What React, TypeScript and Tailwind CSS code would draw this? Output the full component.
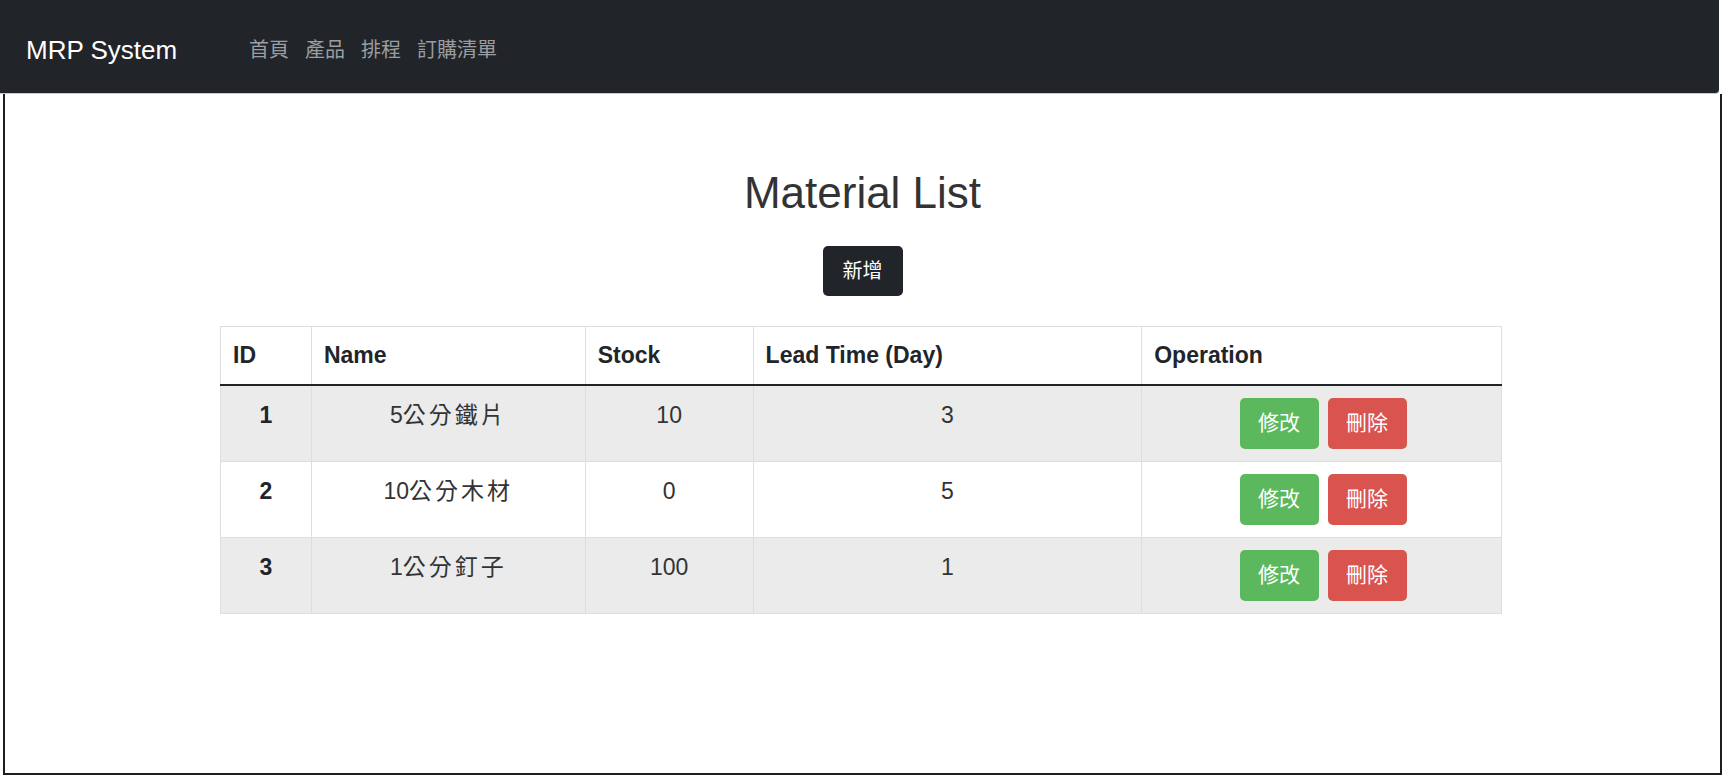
import React from 'react';

interface Material {
  id: number;
  size: string;
  name: string;
  stock: number;
  leadTime: number;
}

const materials: Material[] = [
  { id: 1, size: '5', name: '公分鐵片', stock: 10, leadTime: 3 },
  { id: 2, size: '10', name: '公分木材', stock: 0, leadTime: 5 },
  { id: 3, size: '1', name: '公分釘子', stock: 100, leadTime: 1 },
];

const navLinks = ['首頁', '產品', '排程', '訂購清單'];

const font = {
  fontFamily: '"Liberation Sans", "Noto Sans CJK TC", Arial, sans-serif',
};

export default function App() {
  return (
    <div className="w-[1724px] h-[778px] bg-white overflow-hidden" style={font}>
      <nav className="h-[94px] w-[1719px] bg-[#212529] rounded-br-[4px] border-b border-[#c9c9c9] flex items-center pt-[7px]">
        <span className="ml-[26px] w-[223px] text-[26px] text-white leading-none">MRP System</span>
        <div className="flex gap-4 text-[20px] text-[#9a9da1] leading-none">
          {navLinks.map((link) => (
            <a key={link} href="#" className="hover:text-white">
              {link}
            </a>
          ))}
        </div>
      </nav>

      <main className="ml-[3px] w-[1719px] h-[681px] border-l-2 border-r-2 border-b-2 border-[#1e1e1e] flex flex-col items-center pt-[72px]">
        <h1 className="text-[44px] leading-[53px] text-[#333]">Material List</h1>
        <button className="mt-[27px] w-[80px] h-[50px] rounded-[5px] bg-[#212529] text-white text-[20px]">
          新增
        </button>

        <table className="mt-[30px] -ml-[3px] w-[1282px] border border-[#dedede] border-collapse text-[23px]">
          <colgroup>
            <col className="w-[91px]" />
            <col className="w-[274px]" />
            <col className="w-[168px]" />
            <col className="w-[389px]" />
            <col className="w-[360px]" />
          </colgroup>
          <thead>
            <tr className="h-[58px] border-b-2 border-[#212529] text-[#212529] font-bold text-left">
              <th className="px-[12px] border-r border-[#dedede]">ID</th>
              <th className="px-[12px] border-r border-[#dedede]">Name</th>
              <th className="px-[12px] border-r border-[#dedede]">Stock</th>
              <th className="px-[12px] border-r border-[#dedede]">Lead Time (Day)</th>
              <th className="px-[12px]">Operation</th>
            </tr>
          </thead>
          <tbody>
            {materials.map((m, i) => (
              <tr
                key={m.id}
                className={`border-t border-[#dedede] text-[#333] text-center align-top ${
                  i % 2 === 0 ? 'bg-[#ebebeb]' : 'bg-white'
                }`}
              >
                <td className="pt-[14px] leading-[30px] font-bold text-[#212529] border-r border-[#dedede]">{m.id}</td>
                <td className="pt-[14px] leading-[30px] border-r border-[#dedede]">
                  {m.size}
                  <span className="tracking-[3px]">{m.name}</span>
                </td>
                <td className="pt-[14px] leading-[30px] border-r border-[#dedede]">{m.stock}</td>
                <td className="pt-[14px] leading-[30px] border-r border-[#dedede]">{m.leadTime}</td>
                <td className="py-[12px]">
                  <div className="flex justify-center gap-[9px] pl-[3px]">
                    <button className="w-[79px] h-[51px] rounded-[5px] bg-[#5cb85c] text-white text-[21px]">
                      修改
                    </button>
                    <button className="w-[79px] h-[51px] rounded-[5px] bg-[#d9534f] text-white text-[21px]">
                      刪除
                    </button>
                  </div>
                </td>
              </tr>
            ))}
          </tbody>
        </table>
      </main>
    </div>
  );
}
